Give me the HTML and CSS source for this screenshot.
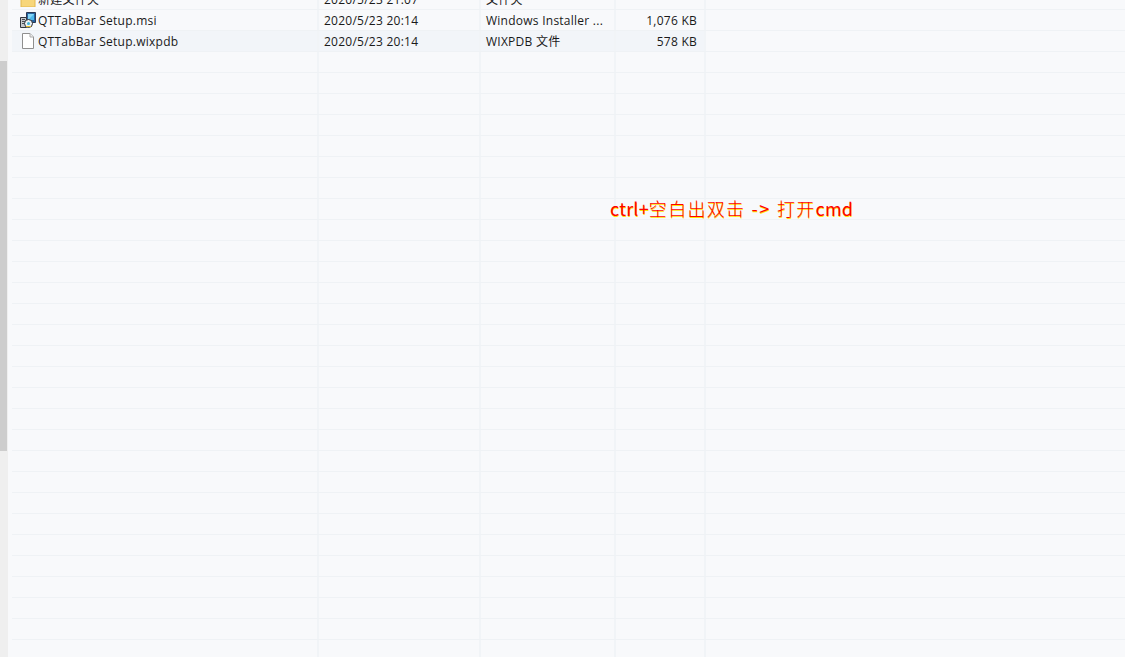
FILE: index.html
```html
<!DOCTYPE html>
<html lang="zh-CN">
<head>
<meta charset="utf-8">
<title>QTTabBar</title>
<link rel="stylesheet" href="styles.css">
</head>
<body>
<div class="window">
  <aside class="rail"><div class="thumb"></div></aside>
  <main class="list">
    <div class="rows" id="rows">
      <div class="row">
        <div class="cell name"><svg class="icon" viewBox="0 0 16 16"><path d="M1 1h14v15H1z" fill="#f7d67a" stroke="#e2b84f"/></svg><span>新建文件夹</span></div>
        <div class="cell date">2020/5/23 21:07</div>
        <div class="cell type">文件夹</div>
        <div class="cell size"></div>
      </div>
      <div class="row">
        <div class="cell name">
          <svg class="icon" viewBox="0 0 16 16">
            <path d="M6.500.5h9v10h-9z" fill="#27639f" stroke="#2c3a55"/>
            <path d="M8 2h6v6H8z" fill="#4fb8ea"/>
            <path d="M8 2h6L8 8z" fill="#86d6f5"/>
            <path d="M.5 5.500h6v10h-6z" fill="#c4c7cc" stroke="#33353b"/>
            <path d="M2 7.500h3M2 9.500h3M2 11.500h3" stroke="#4a4d54"/>
            <circle cx="8.500" cy="11.500" r="4" fill="#eef1f3" stroke="#2a2e35"/>
            <circle cx="8.500" cy="11.500" r="1.500" fill="#3fb3d8"/>
            <path d="M6 14.500h5" stroke="#e3bd2e"/>
          </svg>
          <span>QTTabBar Setup.msi</span>
        </div>
        <div class="cell date">2020/5/23 20:14</div>
        <div class="cell type">Windows Installer ...</div>
        <div class="cell size">1,076 KB</div>
      </div>
      <div class="row tinted">
        <div class="cell name">
          <svg class="icon" viewBox="0 0 16 16">
            <path d="M2.500.5h7.500l3.500 3.500v11.500h-11z" fill="#fff" stroke="#8f8f8f"/>
            <path d="M10 .5v3.500h3.500" fill="#eee" stroke="#a8a8a8"/>
          </svg>
          <span>QTTabBar Setup.wixpdb</span>
        </div>
        <div class="cell date">2020/5/23 20:14</div>
        <div class="cell type">WIXPDB 文件</div>
        <div class="cell size">578 KB</div>
      </div>
      <div class="row"><div class="cell name"></div><div class="cell date"></div><div class="cell type"></div><div class="cell size"></div></div>
      <div class="row"><div class="cell name"></div><div class="cell date"></div><div class="cell type"></div><div class="cell size"></div></div>
      <div class="row"><div class="cell name"></div><div class="cell date"></div><div class="cell type"></div><div class="cell size"></div></div>
      <div class="row"><div class="cell name"></div><div class="cell date"></div><div class="cell type"></div><div class="cell size"></div></div>
      <div class="row"><div class="cell name"></div><div class="cell date"></div><div class="cell type"></div><div class="cell size"></div></div>
      <div class="row"><div class="cell name"></div><div class="cell date"></div><div class="cell type"></div><div class="cell size"></div></div>
      <div class="row"><div class="cell name"></div><div class="cell date"></div><div class="cell type"></div><div class="cell size"></div></div>
      <div class="row"><div class="cell name"></div><div class="cell date"></div><div class="cell type"></div><div class="cell size"></div></div>
      <div class="row"><div class="cell name"></div><div class="cell date"></div><div class="cell type"></div><div class="cell size"></div></div>
      <div class="row"><div class="cell name"></div><div class="cell date"></div><div class="cell type"></div><div class="cell size"></div></div>
      <div class="row"><div class="cell name"></div><div class="cell date"></div><div class="cell type"></div><div class="cell size"></div></div>
      <div class="row"><div class="cell name"></div><div class="cell date"></div><div class="cell type"></div><div class="cell size"></div></div>
      <div class="row"><div class="cell name"></div><div class="cell date"></div><div class="cell type"></div><div class="cell size"></div></div>
      <div class="row"><div class="cell name"></div><div class="cell date"></div><div class="cell type"></div><div class="cell size"></div></div>
      <div class="row"><div class="cell name"></div><div class="cell date"></div><div class="cell type"></div><div class="cell size"></div></div>
      <div class="row"><div class="cell name"></div><div class="cell date"></div><div class="cell type"></div><div class="cell size"></div></div>
      <div class="row"><div class="cell name"></div><div class="cell date"></div><div class="cell type"></div><div class="cell size"></div></div>
      <div class="row"><div class="cell name"></div><div class="cell date"></div><div class="cell type"></div><div class="cell size"></div></div>
      <div class="row"><div class="cell name"></div><div class="cell date"></div><div class="cell type"></div><div class="cell size"></div></div>
      <div class="row"><div class="cell name"></div><div class="cell date"></div><div class="cell type"></div><div class="cell size"></div></div>
      <div class="row"><div class="cell name"></div><div class="cell date"></div><div class="cell type"></div><div class="cell size"></div></div>
      <div class="row"><div class="cell name"></div><div class="cell date"></div><div class="cell type"></div><div class="cell size"></div></div>
      <div class="row"><div class="cell name"></div><div class="cell date"></div><div class="cell type"></div><div class="cell size"></div></div>
      <div class="row"><div class="cell name"></div><div class="cell date"></div><div class="cell type"></div><div class="cell size"></div></div>
      <div class="row"><div class="cell name"></div><div class="cell date"></div><div class="cell type"></div><div class="cell size"></div></div>
      <div class="row"><div class="cell name"></div><div class="cell date"></div><div class="cell type"></div><div class="cell size"></div></div>
      <div class="row"><div class="cell name"></div><div class="cell date"></div><div class="cell type"></div><div class="cell size"></div></div>
      <div class="row"><div class="cell name"></div><div class="cell date"></div><div class="cell type"></div><div class="cell size"></div></div>
      <div class="row"><div class="cell name"></div><div class="cell date"></div><div class="cell type"></div><div class="cell size"></div></div>
    </div>
    <p class="note"><b>ctrl+</b><span class="thin">空白出双击</span> <b class="arrow">-&gt;</b> <span class="thin">打开</span><b>cmd</b></p>
  </main>
</div>
</body>
</html>
```

FILE: styles.css
```css
* { box-sizing: border-box; }
html, body { margin: 0; height: 100%; overflow: hidden; }
body { font-family: "Open Sans", "Noto Sans CJK SC", sans-serif; font-size: 12px; letter-spacing: .25px; color: #1a1a1a; background: #f8f9fb; }
.window { display: flex; height: 657px; }
.rail { flex: 0 0 8px; background: #efefef; padding-top: 61px; }
.thumb { width: 7px; height: 390px; background: #cdcdcd; }
.list { flex: 1; position: relative; overflow: hidden; padding-left: 4px; }
.rows { margin-top: -11px; }
.row { display: grid; grid-template-columns: 307px 162px 135px 90px 1fr; height: 21px; border-bottom: 1px solid #eff2f5; }
.row:last-child { border-bottom: 0; }
.cell { height: 21px; padding-top: 1px; line-height: 20px; border-right: 2px solid #f1f4f7; white-space: nowrap; overflow: hidden; }
.row:not(:last-child) .cell { height: 20px; }
.tinted .cell { background: #f2f5f9; }
.name { display: flex; align-items: center; gap: 2px; padding-left: 8px; padding-top: 0; }
.name span { padding-top: 2px; }
.icon { width: 16px; height: 16px; flex: none; }
.date { padding-left: 5px; }
.type { padding-left: 5px; }
.size { text-align: right; padding-right: 7px; }
.note { position: absolute; left: 602px; top: 196px; margin: 0; font-size: 18px; line-height: 24px; letter-spacing: 0; color: #f00; white-space: nowrap; text-shadow: .5px .5px 0 #ffe600; word-spacing: 2px; font-family: "Noto Sans CJK SC", sans-serif; }
.note b { font-weight: 400; letter-spacing: .2px; }
.note .arrow { letter-spacing: 1.6px; }
.thin { font-weight: 300; letter-spacing: 1.3px; }
```
